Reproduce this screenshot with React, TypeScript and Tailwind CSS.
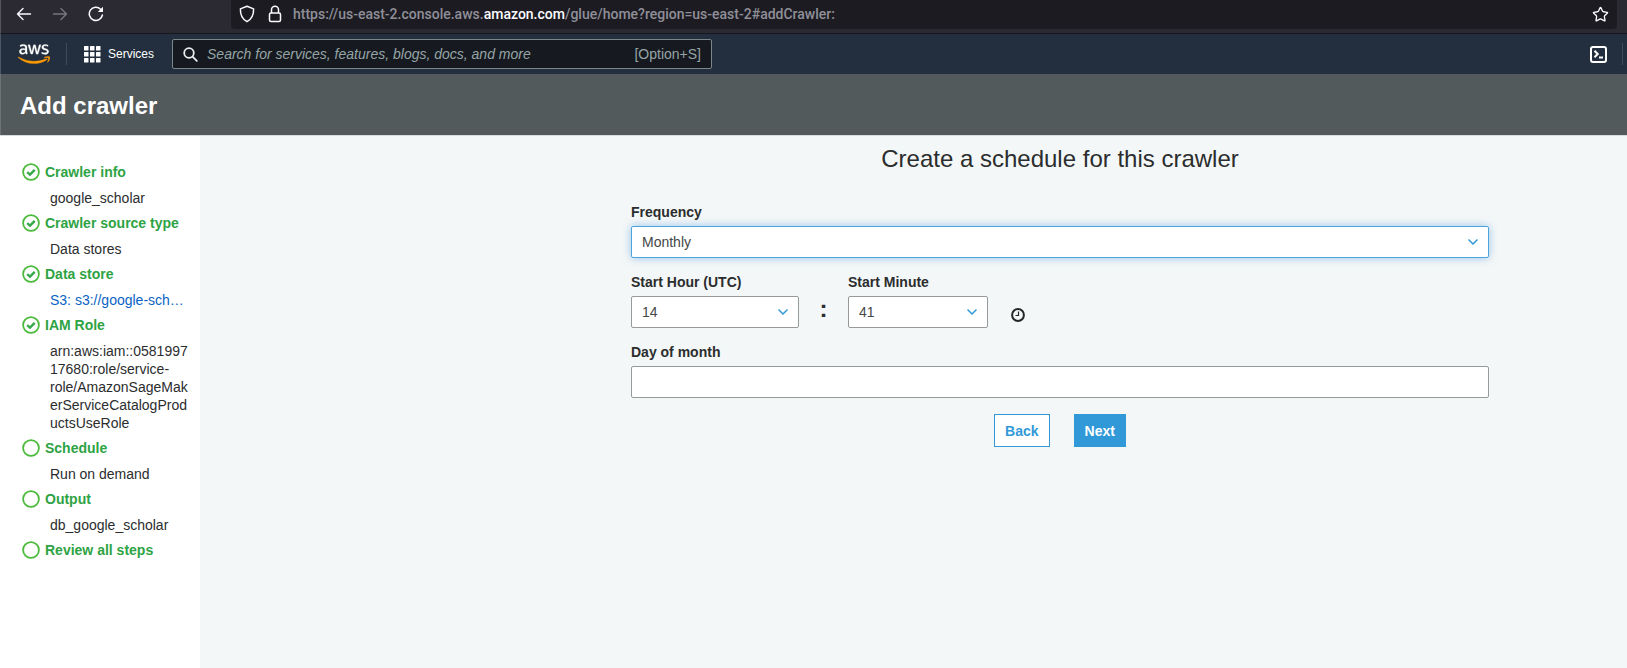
import type { ReactNode } from "react";
import { FaAws } from "react-icons/fa";
import { Star } from "lucide-react";

type Step = { title: string; detail?: string; done?: boolean; link?: boolean };

const steps: Step[] = [
  { title: "Crawler info", detail: "google_scholar", done: true },
  { title: "Crawler source type", detail: "Data stores", done: true },
  { title: "Data store", detail: "S3: s3://google-sch…", done: true, link: true },
  {
    title: "IAM Role",
    detail: "arn:aws:iam::058199717680:role/service-role/AmazonSageMakerServiceCatalogProductsUseRole",
    done: true,
  },
  { title: "Schedule", detail: "Run on demand" },
  { title: "Output", detail: "db_google_scholar" },
  { title: "Review all steps" },
];

function BrowserBar() {
  return (
    <div className="flex h-[34px] items-start border-b border-[#17161c] border-l border-l-[#55555c] bg-[#2b2a33] pr-[10px] text-[#fbfbfe]">
      <div className="flex h-7 w-[230px] shrink-0 items-center gap-5 pl-[15px]">
        <button aria-label="Back" type="button">
          <svg width="16" height="16" viewBox="0 0 16 16" fill="none" stroke="currentColor" strokeWidth="1.4" strokeLinecap="round" strokeLinejoin="round">
            <path d="M14.5 8H1.5M7 2.5 1.5 8 7 13.5" />
          </svg>
        </button>
        <button aria-label="Forward" type="button" className="text-[#77767d]">
          <svg width="16" height="16" viewBox="0 0 16 16" fill="none" stroke="currentColor" strokeWidth="1.4" strokeLinecap="round" strokeLinejoin="round">
            <path d="M1.5 8H14.5M9 2.5 14.5 8 9 13.5" />
          </svg>
        </button>
        <button aria-label="Reload" type="button">
          <svg width="16" height="16" viewBox="0 0 16 16" fill="none" stroke="currentColor" strokeWidth="1.5" strokeLinecap="round" strokeLinejoin="round">
            <path d="M14.4 9A6.6 6.6 0 1 1 12.6 3.2L14 4.6" />
            <path d="M15 0.8V6H9.8Z" fill="currentColor" stroke="none" />
          </svg>
        </button>
      </div>
      <div className="flex h-[29px] grow items-center rounded-b bg-[#1c1b22] pr-2 pb-px pl-2">
        <svg width="16" height="18" viewBox="0 0 16 18" fill="none" stroke="currentColor" strokeWidth="1.5" strokeLinejoin="round" className="shrink-0">
          <path d="M8 1.3 14.6 3.9C14.8 9.5 12.5 14.3 8 16.7 3.5 14.3 1.2 9.5 1.4 3.9Z" />
        </svg>
        <svg width="14" height="18" viewBox="0 0 14 18" fill="none" stroke="currentColor" strokeWidth="1.5" className="ml-[13px] shrink-0">
          <rect x="1.5" y="8" width="11" height="8.5" rx="1.5" />
          <path d="M3.5 8V4.8A3.5 3.5 0 0 1 10.5 4.8V8" />
        </svg>
        <p className="ml-[11px] grow font-['Roboto',sans-serif] text-sm font-medium whitespace-nowrap text-[#8f8f98]">
          https://us-east-2.console.aws.<span className="text-[#fbfbfe]">amazon.com</span>/glue/home?region=us-east-2#addCrawler:
        </p>
        <button aria-label="Bookmark this page" type="button">
          <Star size={17} strokeWidth={1.9} />
        </button>
      </div>
    </div>
  );
}

function ConsoleHeader() {
  return (
    <header className="flex h-10 items-center border-l border-[#4c5663] bg-[#232f3e] pr-1 pl-[17px] text-white">
      <a href="#home" aria-label="AWS home">
        <svg width="0" height="0" className="absolute">
          <linearGradient id="aws-mark" x1="0" y1="0" x2="0" y2="1">
            <stop offset="0.63" stopColor="#ffffff" />
            <stop offset="0.63" stopColor="#ff9900" />
          </linearGradient>
        </svg>
        <FaAws size={32} className="fill-[url(#aws-mark)] stroke-[url(#aws-mark)] stroke-[6px]" />
      </a>
      <span className="ml-4 h-[22px] w-px bg-[#414b57]" />
      <button type="button" className="ml-[17px] flex items-center gap-[7px] text-xs">
        <svg width="17" height="17" viewBox="0 0 17 17" fill="currentColor">
          {[0, 6, 12].map((y) => [0, 6, 12].map((x) => <rect key={`${x}-${y}`} x={x} y={y} width="4.5" height="4.5" rx="0.6" />))}
        </svg>
        Services
      </button>
      <label className="ml-[18px] flex h-[30px] w-[540px] items-center rounded-xs border border-[#7b8787] bg-[#16191f] pr-[10px] pl-[10px] text-[#95a5a6]">
        <svg width="15" height="15" viewBox="0 0 15 15" fill="none" stroke="#eaeded" strokeWidth="1.8" strokeLinecap="round">
          <circle cx="6" cy="6" r="4.8" />
          <path d="M9.6 9.6 13.8 13.8" />
        </svg>
        <input
          type="search"
          aria-label="Search"
          placeholder="Search for services, features, blogs, docs, and more"
          className="ml-[9px] min-w-0 grow bg-transparent text-sm outline-none placeholder:text-[#95a5a6] placeholder:italic"
        />
        <span className="text-sm">[Option+S]</span>
      </label>
      <button type="button" aria-label="CloudShell" className="ml-auto">
        <svg width="17" height="17" viewBox="0 0 17 17" fill="none" stroke="currentColor" strokeWidth="2">
          <rect x="1" y="1" width="15" height="15" rx="2" />
          <path d="M4.5 4.8 7.7 8 4.5 11.2M9 11.5H13" />
        </svg>
      </button>
      <span className="ml-[15px] h-[22px] w-px bg-[#414b57]" />
    </header>
  );
}

function StepMark({ done }: { done?: boolean }) {
  return (
    <svg width="18" height="18" viewBox="0 0 18 18" fill="none" className="shrink-0">
      <circle cx="9" cy="9" r="7.9" stroke="#4cba3c" strokeWidth="1.8" />
      {done && <path d="M5.2 9.2 8 11.6 12.7 6.8" stroke="#35a84a" strokeWidth="2.4" />}
    </svg>
  );
}

function StepList() {
  return (
    <nav aria-label="Steps" className="w-[200px] shrink-0 bg-white pt-[27px] pr-3 pl-[22px] text-sm leading-[18px]">
      <ol>
        {steps.map((s) => (
          <li key={s.title} className="mb-[7px]">
            <div className="flex items-center gap-[5px] font-bold text-[#2ea344]">
              <StepMark done={s.done} />
              {s.title}
            </div>
            {s.detail &&
              (s.link ? (
                <a href="#data-store" className="mt-2 ml-7 block text-[#0a63c4]">
                  {s.detail}
                </a>
              ) : (
                <p className="mt-2 ml-7 break-words text-[#2b2d2e]">{s.detail}</p>
              ))}
          </li>
        ))}
      </ol>
    </nav>
  );
}

function Field({ id, label, className, children }: { id: string; label: string; className: string; children: ReactNode }) {
  return (
    <div className={className}>
      <label htmlFor={id} className="mb-[5px] block text-sm leading-[18px] font-bold">
        {label}
      </label>
      {children}
    </div>
  );
}

function Dropdown({ id, label, options, className, focused }: { id: string; label: string; options: string[]; className: string; focused?: boolean }) {
  return (
    <Field id={id} label={label} className={className}>
      <div className="grid items-center">
        <select
          id={id}
          className={`col-start-1 row-start-1 h-8 w-full appearance-none rounded-xs border bg-white pr-7 pl-[10px] text-sm text-[#444747] outline-none ${
            focused ? "border-[#4ba6dd] shadow-[0_0_8px_rgba(75,150,225,0.55)]" : "border-[#979a9b]"
          }`}
        >
          {options.map((o) => (
            <option key={o}>{o}</option>
          ))}
        </select>
        <svg width="10" height="6" viewBox="0 0 10 6" fill="none" stroke="#3199d8" strokeWidth="1.5" className="pointer-events-none col-start-1 row-start-1 mr-[11px] justify-self-end">
          <path d="M0.5 0.5 5 5 9.5 0.5" />
        </svg>
      </div>
    </Field>
  );
}

export default function App() {
  return (
    <div className="flex min-h-screen flex-col font-['Liberation_Sans',Arial,sans-serif] text-[#2b2d2e]">
      <BrowserBar />
      <ConsoleHeader />
      <div className="flex h-[61px] items-center border-l border-[#6b7374] bg-[#525a5b] pt-[3px] pl-[19px]">
        <h1 className="text-2xl font-bold text-white">Add crawler</h1>
      </div>
      <div className="flex grow border-t border-[#d9dcdc]">
        <StepList />
        <main className="grow bg-[#f4f7f7] pt-[7px] pr-[138px] pl-[431px]">
          <h2 className="text-center text-2xl">Create a schedule for this crawler</h2>
          <form className="mt-7 flex flex-col gap-[15px]">
            <Dropdown id="frequency" label="Frequency" options={["Monthly"]} className="w-full" focused />
            <div className="flex items-end">
              <Dropdown id="hour" label="Start Hour (UTC)" options={["14"]} className="w-[168px]" />
              <span className="w-[49px] pb-[3px] text-center text-2xl leading-8 font-bold">:</span>
              <Dropdown id="minute" label="Start Minute" options={["41"]} className="w-[140px]" />
              <svg width="14" height="14" viewBox="0 0 14 14" fill="none" stroke="#242627" className="mb-[6px] ml-[23px]">
                <circle cx="7" cy="7" r="5.9" strokeWidth="2" />
                <path d="M7.5 3.5V7.5H4.5" strokeWidth="1.2" />
              </svg>
            </div>
            <Field id="day" label="Day of month" className="w-full">
              <input id="day" type="text" className="block h-8 w-full rounded-xs border border-[#979a9b] bg-white px-[10px] text-sm outline-none" />
            </Field>
            <div className="flex justify-center gap-6 pt-px text-sm font-bold">
              <button type="button" className="h-[33px] border border-[#3199d8] bg-white px-[10px] text-[#3199d8]">
                Back
              </button>
              <button type="button" className="h-[33px] border border-[#3199d8] bg-[#3199d8] px-[10px] text-white">
                Next
              </button>
            </div>
          </form>
        </main>
      </div>
    </div>
  );
}
